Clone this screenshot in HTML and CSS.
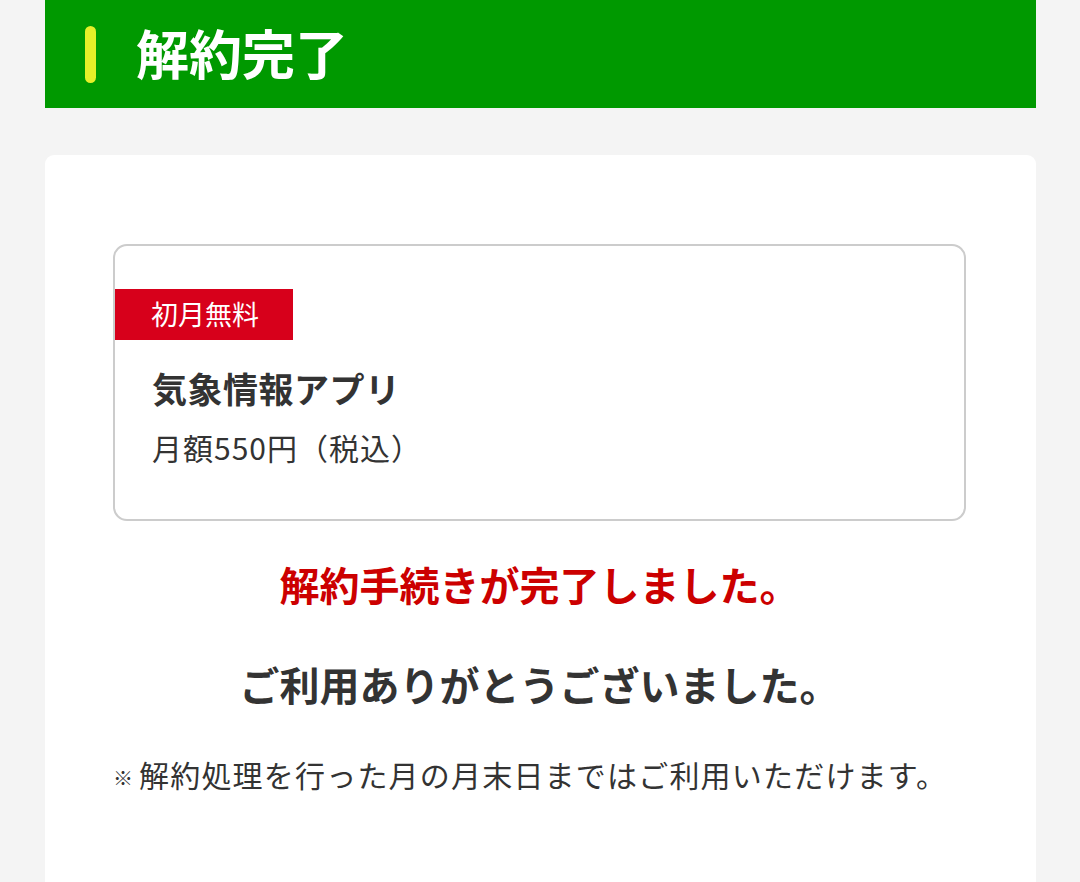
FILE: index.html
```html
<!DOCTYPE html>
<html lang="ja">
<head>
<meta charset="utf-8">
<link rel="stylesheet" href="styles.css">
</head>
<body>
<div class="page">
  <header class="header">
    <span class="header-bar"></span>
    <h1 class="header-title">解約完了</h1>
  </header>
  <main class="card">
    <section class="plan">
      <div class="badge">初月無料</div>
      <div class="plan-name">気象情報アプリ</div>
      <div class="plan-price">月額550円（税込）</div>
    </section>
    <p class="done">解約手続きが完了しました。</p>
    <p class="thanks">ご利用ありがとうございました。</p>
    <p class="note"><span class="note-mark">※</span>解約処理を行った月の月末日まではご利用いただけます。</p>
  </main>
</div>
</body>
</html>
```

FILE: styles.css
```css
html, body {
  margin: 0;
  padding: 0;
  background: #f4f4f4;
  height: 100%;
}
body {
  font-family: "Noto Sans CJK JP", "Noto Sans", sans-serif;
  color: #333333;
  overflow: hidden;
}
.page {
  width: 991px;
  margin: 0 0 0 45px;
}
.header {
  height: 108px;
  background: #009900;
  display: flex;
  align-items: center;
  padding-left: 40px;
  box-sizing: border-box;
}
.header-bar {
  width: 11px;
  height: 57px;
  border-radius: 6px;
  background: #e5f029;
  margin-right: 40px;
}
.header-title {
  margin: 0;
  font-size: 53px;
  font-weight: 700;
  color: #ffffff;
  line-height: 1;
  margin-top: -3px;
}
.card {
  margin-top: 47px;
  background: #ffffff;
  border-radius: 9px 9px 0 0;
  padding: 89px 70px 100px 68px;
  height: 800px;
}
.plan {
  border: 2px solid #cccccc;
  border-radius: 14px;
  height: 277px;
  box-sizing: border-box;
  padding-top: 43px;
}
.badge {
  display: inline-flex;
  align-items: center;
  width: 178px;
  height: 51px;
  box-sizing: border-box;
  padding-left: 36px;
  background: #d7001b;
  color: #ffffff;
  font-size: 27px;
  line-height: 1;
  padding-bottom: 3px;
}
.plan-name {
  margin: 26px 0 0 37px;
  font-size: 35px;
  font-weight: 700;
  line-height: 44px;
  letter-spacing: 0.5px;
}
.plan-price {
  margin: 17px 0 0 37px;
  font-size: 30px;
  line-height: 40px;
  letter-spacing: 1px;
}
.done {
  margin: 38px 0 0 0;
  text-align: center;
  color: #cc0000;
  font-size: 40px;
  font-weight: 700;
  line-height: 50px;
}
.thanks {
  margin: 50px 0 0 0;
  text-align: center;
  font-size: 40px;
  font-weight: 700;
  line-height: 50px;
}
.note {
  margin: 45px 0 0 0;
  font-size: 30px;
  line-height: 40px;
  letter-spacing: 1.2px;
}
.note-mark {
  display: inline-block;
  font-size: 20px;
  width: 26px;
  vertical-align: 1px;
  letter-spacing: 0;
}
```
